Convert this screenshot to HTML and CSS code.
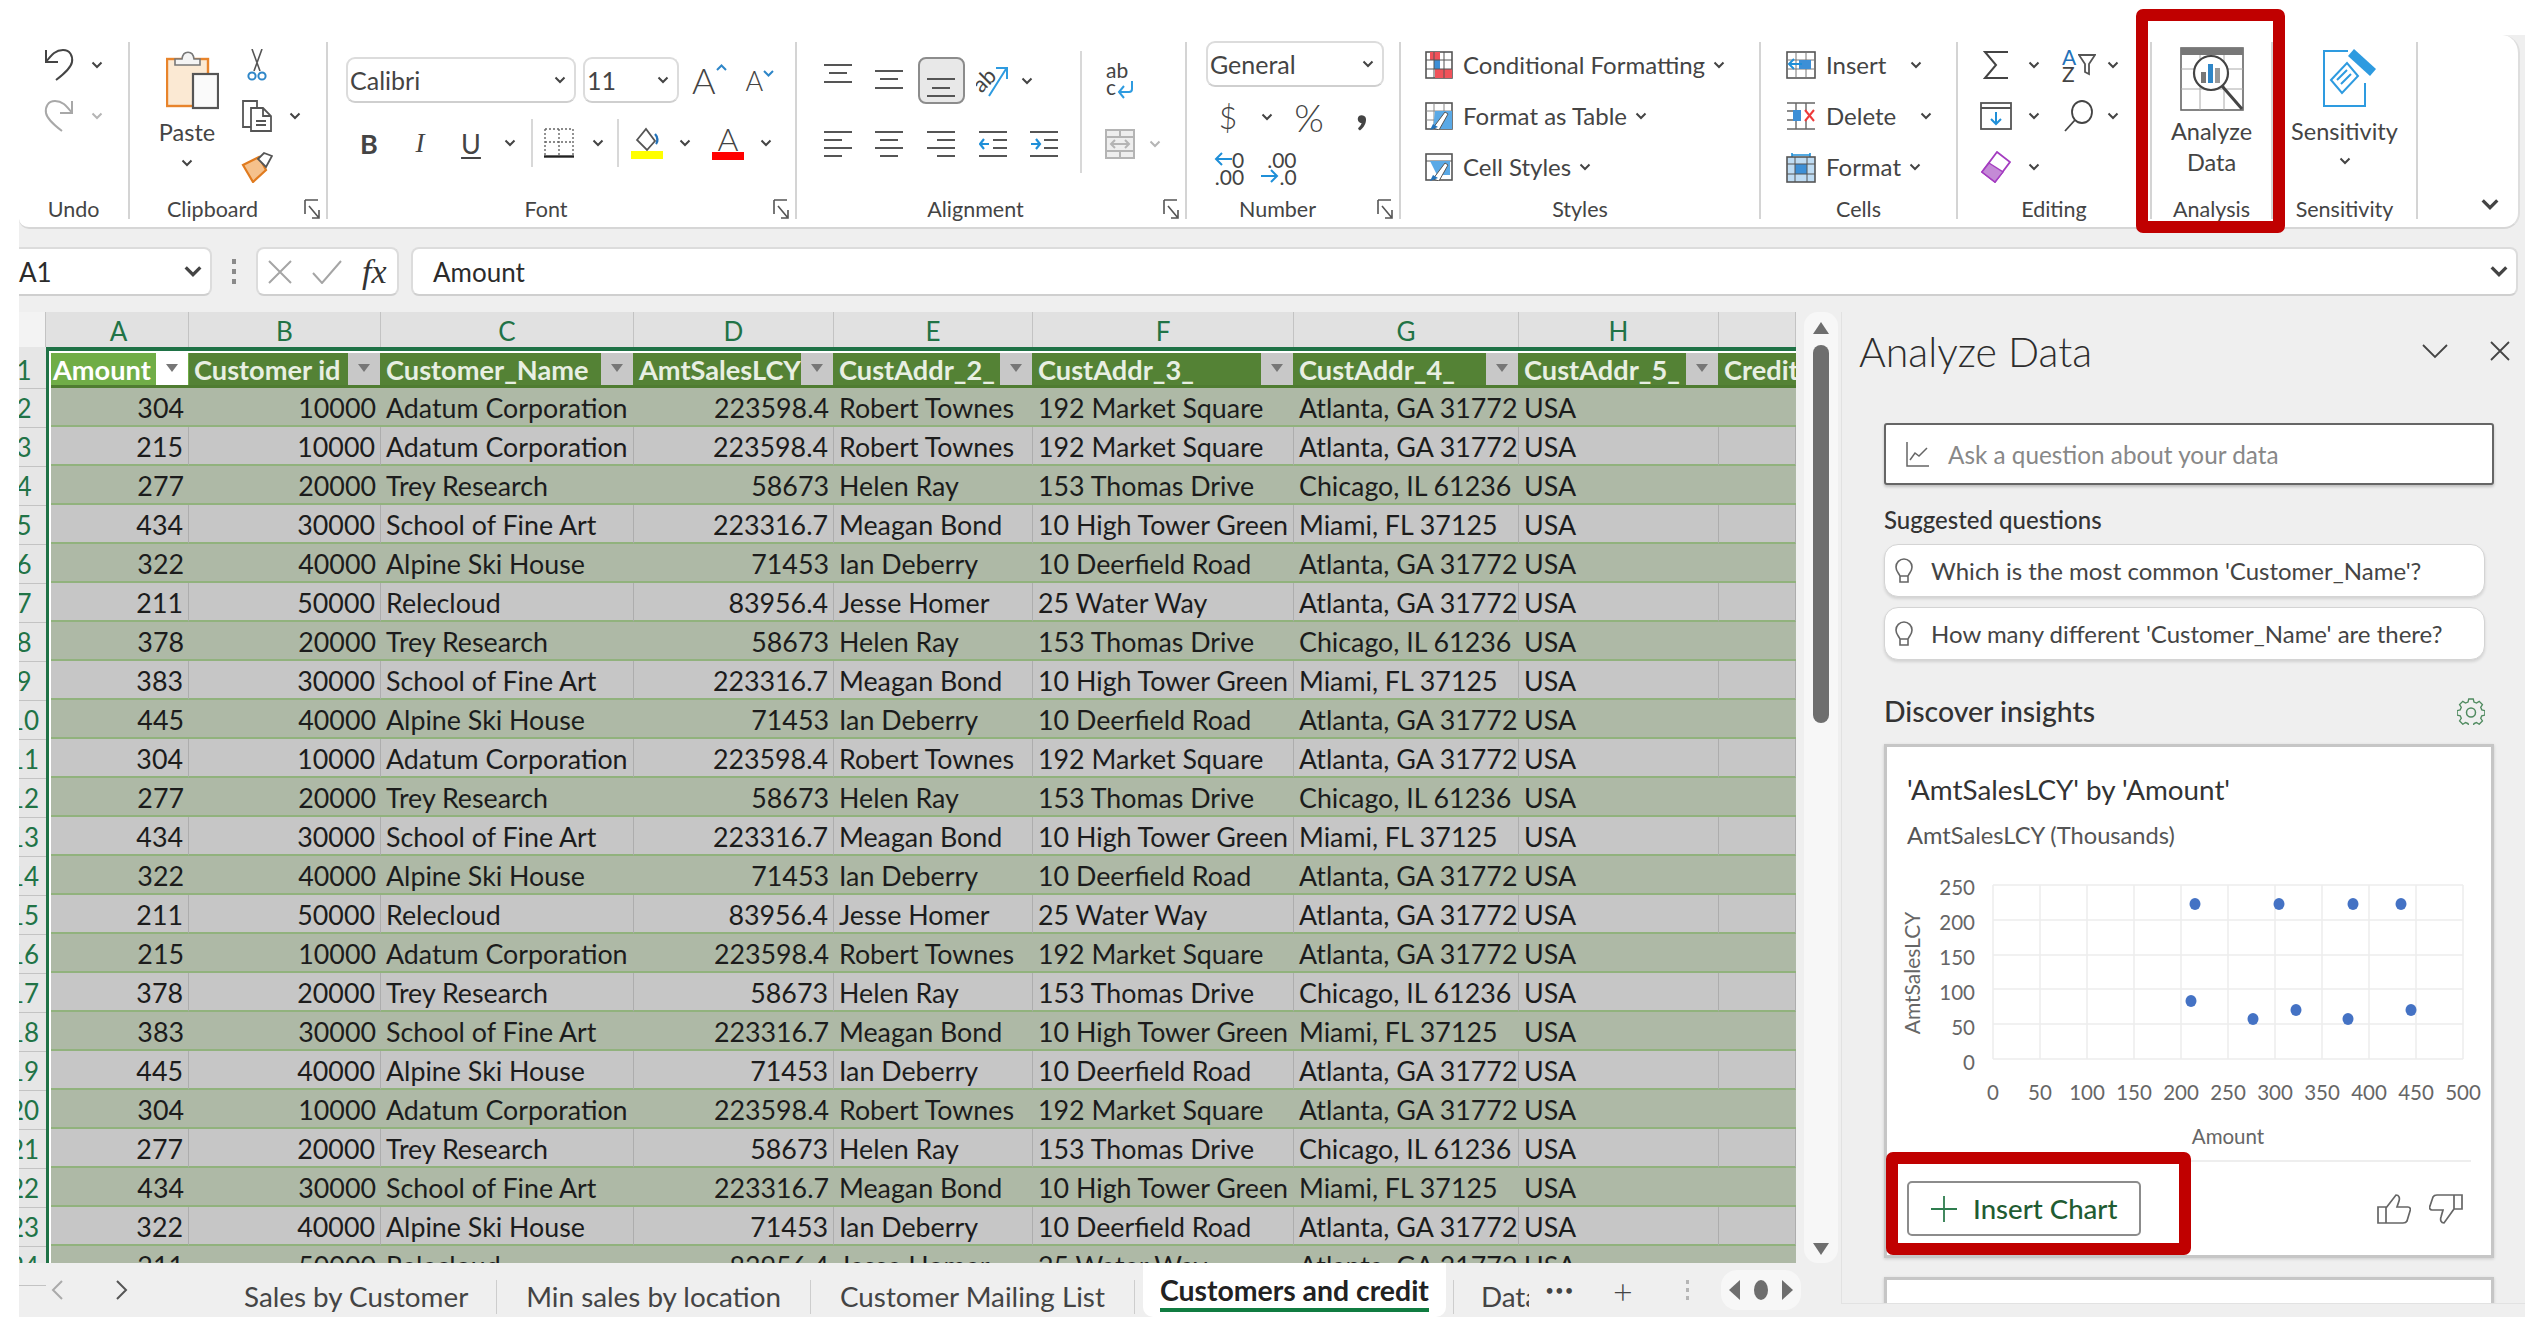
FILE: index.html
```html
<!DOCTYPE html>
<html lang="en">
<head>
    <meta charset="UTF-8">
    <title>Customers and credit - Excel</title>
    <link rel="stylesheet" href="styles.css">
</head>
<body>
    <svg class="sprite" width="0" height="0">
        <symbol id="chev" viewBox="0 0 12 8"><path d="M1.5 1.5 6 6l4.5-4.5" fill="none" stroke="currentColor" stroke-width="2"/></symbol>
        <symbol id="launcher" viewBox="0 0 16 20"><path d="M1 1h13M1 1v14M15 19 5 7M15 11v8H8" fill="none" stroke="#555" stroke-width="1.6"/></symbol>
    </svg>

    <div class="app">
        <!-- ribbon -->
        <div class="ribbon">
            <div class="group undo">
                <div class="grid3 undo-grid">
                    <svg width="30" height="33" viewBox="0 0 30 33" fill="none" stroke="#444" stroke-width="2"><path d="M2 2v12h12M2 14C8 6 12 2 19 2c7 0 10 6 9 12-1 6-8 12-16 18"/></svg>
                    <svg class="chev"><use href="#chev"/></svg>
                    <svg width="30" height="33" viewBox="0 0 30 33" fill="none" stroke="#a8a8a8" stroke-width="2"><path d="M28 2v12H16M28 14C22 6 18 2 11 2 4 2 1 8 2 14c1 6 8 12 16 18"/></svg>
                    <svg class="chev off"><use href="#chev"/></svg>
                </div>
                <div class="label"><span>Undo</span></div>
            </div>

            <div class="group clipboard">
                <div class="clip-body">
                    <div class="big-btn paste">
                        <svg class="paste-icon" width="53" height="60" viewBox="0 0 53 60"><rect x="1" y="9" width="41" height="47" fill="#fbe9d3" stroke="#e8842b" stroke-width="2.4"/><path d="M9 15V9h7c1-9 11-9 12 0h6v6z" fill="#f4f4f4" stroke="#777" stroke-width="1.6"/><rect x="27" y="24" width="25" height="34" fill="#fafafa" stroke="#555" stroke-width="2.2"/></svg>
                        <span class="big-text">Paste</span>
                        <svg class="chev"><use href="#chev"/></svg>
                    </div>
                    <div class="grid3 clip-grid">
                        <svg width="22" height="32" viewBox="0 0 22 32" fill="none"><path d="M6 0l8 22M16 0 8 22" stroke="#555" stroke-width="1.6"/><circle cx="6" cy="27" r="3.6" stroke="#2e86c8" stroke-width="2"/><circle cx="16" cy="27" r="3.6" stroke="#2e86c8" stroke-width="2"/></svg>
                        <span></span>
                        <svg width="32" height="33" viewBox="0 0 32 33" fill="none" stroke="#555" stroke-width="1.8"><path d="M10 28H2V2h14v7"/><path d="M10 9h12l8 8v15H10zM22 9v8h8M15 22h10M15 26h10" fill="#fff"/></svg>
                        <svg class="chev"><use href="#chev"/></svg>
                        <svg width="32" height="32" viewBox="0 0 32 32"><path d="M2 14 18 6l7 13-13 12z" fill="#f5c18c" stroke="#e07b1f" stroke-width="2.2"/><path d="M17 8l6-6 8 3-6 11z" fill="#fff" stroke="#555" stroke-width="1.8"/></svg>
                    </div>
                </div>
                <div class="label"><span>Clipboard</span><svg class="launch"><use href="#launcher"/></svg></div>
            </div>

            <div class="group font">
                <div class="font-body">
                    <div class="font-row">
                        <div class="select font-name"><span>Calibri</span><svg class="chev"><use href="#chev"/></svg></div>
                        <div class="select font-size"><span>11</span><svg class="chev"><use href="#chev"/></svg></div>
                        <span class="grow-a">A<svg width="11" height="7" viewBox="0 0 11 7"><path d="M1 6l4.5-4.5L10 6" fill="none" stroke="#2e86c8" stroke-width="2"/></svg></span>
                        <span class="shrink-a">A<svg width="11" height="7" viewBox="0 0 11 7"><path d="M1 1l4.5 4.5L10 1" fill="none" stroke="#2e86c8" stroke-width="2"/></svg></span>
                    </div>
                    <div class="font-tools">
                        <span class="fmt bold">B</span>
                        <span class="fmt ital">I</span>
                        <span class="fmt under">U</span>
                        <svg class="chev"><use href="#chev"/></svg>
                        <span class="vsep"></span>
                        <svg width="30" height="30" viewBox="0 0 30 30" fill="none" stroke="#666"><path d="M1 1h28M1 1v26M29 1v26M15 1v26M1 14h28" stroke-width="1.4" stroke-dasharray="2 2"/><path d="M0 28.5h30" stroke="#222" stroke-width="2.4"/></svg>
                        <svg class="chev"><use href="#chev"/></svg>
                        <span class="vsep"></span>
                        <svg width="32" height="32" viewBox="0 0 32 32"><path d="M6 13 15 2l9 12-8 9z" fill="#fff" stroke="#555" stroke-width="1.8"/><path d="M24 7c3 3 3 8 1 10" fill="none" stroke="#2372b9" stroke-width="2.4"/><rect y="24" width="32" height="8" fill="#ffff00"/></svg>
                        <svg class="chev"><use href="#chev"/></svg>
                        <div class="color-a"><span>A</span><i></i></div>
                        <svg class="chev"><use href="#chev"/></svg>
                    </div>
                </div>
                <div class="label"><span>Font</span><svg class="launch"><use href="#launcher"/></svg></div>
            </div>

            <div class="group alignment">
                <div class="align-grid">
                    <svg width="28" height="40" viewBox="0 0 28 40" stroke="#555" stroke-width="2.2"><path d="M0 4h28M5 12h18M0 21h28"/></svg>
                    <svg width="28" height="40" viewBox="0 0 28 40" stroke="#555" stroke-width="2.2"><path d="M0 10h28M5 18h18M0 27h28"/></svg>
                    <span class="active-btn"><svg width="28" height="40" viewBox="0 0 28 40" stroke="#555" stroke-width="2.2"><path d="M0 18h28M5 27h18M0 35h28"/></svg></span>
                    <svg width="34" height="36" viewBox="0 0 34 36"><text class="orient" x="-3" y="25" transform="rotate(-45 8 18)">ab</text><path d="M13 33 30 6M20 5h11v11" fill="none" stroke="#2e9be0" stroke-width="2"/></svg>
                    <svg class="chev"><use href="#chev"/></svg>
                    <span></span>
                    <span class="vsep tall"></span>
                    <svg width="34" height="36" viewBox="0 0 34 36"><text class="wrap-t" x="3" y="15">ab</text><text class="wrap-t" x="3" y="32">c</text><path d="M29 18v8q0 3-3 3H16M21 23l-5 6 5 6" fill="none" stroke="#2e9be0" stroke-width="2"/></svg>
                    <span></span>
                    <svg width="28" height="28" viewBox="0 0 28 28" stroke="#555" stroke-width="2.2"><path d="M0 2h28M0 10h18M0 18h28M0 26h18"/></svg>
                    <svg width="28" height="28" viewBox="0 0 28 28" stroke="#555" stroke-width="2.2"><path d="M0 2h28M5 10h18M0 18h28M5 26h18"/></svg>
                    <svg width="28" height="28" viewBox="0 0 28 28" stroke="#555" stroke-width="2.2"><path d="M0 2h28M10 10h18M0 18h28M10 26h18"/></svg>
                    <svg width="28" height="28" viewBox="0 0 28 28" fill="none" stroke-width="2.2"><path d="M0 2h28M14 10h14M14 18h14M0 26h28" stroke="#555"/><path d="M10 14H1M5 9l-4 5 4 5" stroke="#1f8fd8"/></svg>
                    <svg class="span2" width="28" height="28" viewBox="0 0 28 28" fill="none" stroke-width="2.2"><path d="M0 2h28M14 10h14M14 18h14M0 26h28" stroke="#555"/><path d="M1 14h9M6 9l4 5-4 5" stroke="#1f8fd8"/></svg>
                    <svg width="30" height="30" viewBox="0 0 30 30" fill="none" stroke="#b4b4b4" stroke-width="2"><rect x="1" y="1" width="28" height="28" fill="#eee"/><path d="M1 8h28M1 22h28M15 1v7M15 22v7M6 15h18M10 11l-4 4 4 4M20 11l4 4-4 4"/></svg>
                    <svg class="chev off"><use href="#chev"/></svg>
                </div>
                <div class="label"><span>Alignment</span><svg class="launch"><use href="#launcher"/></svg></div>
            </div>

            <div class="group number">
                <div class="number-body">
                    <div class="select number-fmt"><span>General</span><svg class="chev"><use href="#chev"/></svg></div>
                    <div class="num-row">
                        <span class="num-glyph">$</span>
                        <svg class="chev"><use href="#chev"/></svg>
                        <span class="num-glyph pct">%</span>
                        <span class="num-glyph comma">,</span>
                    </div>
                    <div class="num-row dec-row">
                        <span class="dec"><b><svg width="18" height="16" viewBox="0 0 18 16" fill="none" stroke="#1f8fd8" stroke-width="2"><path d="M18 8H2M8 2 2 8l6 6"/></svg>0</b><b class="end">.00</b></span>
                        <span class="dec"><b class="end">.00</b><b><svg width="18" height="16" viewBox="0 0 18 16" fill="none" stroke="#1f8fd8" stroke-width="2"><path d="M0 8h16M10 2l6 6-6 6"/></svg>.0</b></span>
                    </div>
                </div>
                <div class="label"><span>Number</span><svg class="launch"><use href="#launcher"/></svg></div>
            </div>

            <div class="group styles">
                <div class="list-body">
                    <div class="list-row">
                        <svg width="28" height="28" viewBox="0 0 28 28"><rect x="1" y="1" width="26" height="26" fill="#fff" stroke="#555" stroke-width="1.6"/><rect x="5" y="1" width="10" height="8" fill="#f0525a"/><rect x="10" y="18" width="17" height="9" fill="#f0525a"/><rect x="9" y="9" width="6" height="9" fill="#3d8fd6"/><path d="M1 9h26M1 18h26M9 1v26M19 1v26" stroke="#555" fill="none"/></svg>
                        <span>Conditional Formatting</span><svg class="chev small"><use href="#chev"/></svg>
                    </div>
                    <div class="list-row">
                        <svg width="28" height="28" viewBox="0 0 28 28"><rect x="1" y="1" width="26" height="26" fill="#fff" stroke="#555" stroke-width="1.6"/><path d="M1 9h26M1 18h26M9 1v26M19 1v26" stroke="#888" fill="none"/><path d="M10 9h17v18H8z" fill="#5aa9e6"/><path d="M8 26 20 10l3 2-9 16z" fill="#fff" stroke="#555"/><path d="M5 28l3-6 5 3z" fill="#2372b9"/></svg>
                        <span>Format as Table</span><svg class="chev small"><use href="#chev"/></svg>
                    </div>
                    <div class="list-row">
                        <svg width="28" height="28" viewBox="0 0 28 28"><rect x="1" y="1" width="26" height="26" fill="#fff" stroke="#555" stroke-width="1.6"/><path d="M1 8h26" stroke="#555"/><path d="M5 8h20v14H12z" fill="#5aa9e6"/><path d="M8 26 20 10l3 2-9 16z" fill="#fff" stroke="#555"/><path d="M5 28l3-6 5 3z" fill="#2372b9"/></svg>
                        <span>Cell Styles</span><svg class="chev small"><use href="#chev"/></svg>
                    </div>
                </div>
                <div class="label"><span>Styles</span></div>
            </div>

            <div class="group cells">
                <div class="list-body">
                    <div class="list-row">
                        <svg width="30" height="28" viewBox="0 0 30 28"><rect x="1" y="1" width="28" height="26" fill="#fff" stroke="#555" stroke-width="1.6"/><path d="M1 9h28M1 18h28M10 1v26M20 1v26" stroke="#777" fill="none"/><rect x="13" y="9" width="12" height="9" fill="#3d8fd6"/><path d="M16 13H3M8 8l-5 5 5 5" fill="none" stroke="#1f8fd8" stroke-width="2"/></svg>
                        <span>Insert</span><svg class="chev wide"><use href="#chev"/></svg>
                    </div>
                    <div class="list-row">
                        <svg width="30" height="28" viewBox="0 0 30 28"><path d="M1 1h28M1 9h10M1 18h10M1 27h28M10 1v26M20 1v8M20 18v9" stroke="#666" stroke-width="1.4" fill="none"/><rect x="7" y="8" width="8" height="11" fill="#3d8fd6"/><path d="M19 8l9 11M28 8l-9 11" stroke="#ee3b3b" stroke-width="2"/></svg>
                        <span>Delete</span><svg class="chev wide"><use href="#chev"/></svg>
                    </div>
                    <div class="list-row">
                        <svg width="30" height="32" viewBox="0 0 30 32"><path d="M6 2v5M24 2v5M6 4h18" stroke="#1f8fd8" stroke-width="1.6"/><rect x="1" y="6" width="28" height="25" fill="#bfdcf3" stroke="#555" stroke-width="1.6"/><rect x="9" y="13" width="12" height="10" fill="#3d8fd6"/><path d="M1 13h28M1 23h28M9 6v25M21 6v25" stroke="#555" fill="none"/></svg>
                        <span>Format</span><svg class="chev small"><use href="#chev"/></svg>
                    </div>
                </div>
                <div class="label"><span>Cells</span></div>
            </div>

            <div class="group editing">
                <div class="grid3 edit-grid">
                    <svg width="26" height="30" viewBox="0 0 26 30" fill="none" stroke="#444" stroke-width="2"><path d="M25 2H2l11 13L2 28h23"/></svg>
                    <svg class="chev"><use href="#chev"/></svg>
                    <span class="sort"><b>A</b><b>Z</b><svg width="18" height="22" viewBox="0 0 18 22"><path d="M1 1h16l-6 9v10l-4-2v-8z" fill="none" stroke="#555" stroke-width="1.8"/></svg></span>
                    <svg class="chev"><use href="#chev"/></svg>
                    <svg width="32" height="28" viewBox="0 0 32 28" fill="none"><rect x="1" y="1" width="30" height="26" fill="#fff" stroke="#555" stroke-width="1.8"/><path d="M1 6h30" stroke="#555" stroke-width="2"/><path d="M16 10v12M11 17l5 5 5-5" stroke="#1f8fd8" stroke-width="2"/></svg>
                    <svg class="chev"><use href="#chev"/></svg>
                    <svg width="30" height="32" viewBox="0 0 30 32" fill="none" stroke="#444" stroke-width="1.8"><ellipse cx="18" cy="12" rx="10" ry="11"/><path d="M11 20 1 31"/></svg>
                    <svg class="chev"><use href="#chev"/></svg>
                    <svg width="30" height="32" viewBox="0 0 30 32"><path d="M16 1 29 11 14 31 1 21z" fill="#fff" stroke="#a43cc0" stroke-width="1.8"/><path d="M8 12l14 9-8 10L1 21z" fill="#c48ad6" stroke="#a43cc0" stroke-width="1.4"/></svg>
                    <svg class="chev"><use href="#chev"/></svg>
                </div>
                <div class="label"><span>Editing</span></div>
            </div>

            <div class="group analysis">
                <div class="big-btn tall-btn">
                    <svg width="64" height="64" viewBox="0 0 64 64" fill="none"><rect x="1" y="1" width="62" height="62" fill="#fff" stroke="#666" stroke-width="1.6"/><rect x="1" y="1" width="62" height="7" fill="#777"/><path d="M1 22h62M1 42h62M20 8v55M44 8v55" stroke="#aaa"/><circle cx="31" cy="26" r="17" fill="#fff" stroke="#444" stroke-width="2.2"/><rect x="21" y="25" width="5" height="11" fill="#777"/><rect x="28" y="17" width="5" height="19" fill="#2e86c8"/><rect x="35" y="21" width="5" height="15" fill="#999"/><path d="M42 39 62 62" stroke="#444" stroke-width="3"/></svg>
                    <span class="big-text first">Analyze</span>
                    <span class="big-text">Data</span>
                </div>
                <div class="label"><span>Analysis</span></div>
            </div>

            <div class="group sensitivity">
                <div class="big-btn tall-btn">
                    <svg class="sens-icon" width="54" height="60" viewBox="0 0 54 60" fill="none"><path d="M25 4H1v55h41V36" stroke="#2e9be0" stroke-width="2"/><path d="M37 4l-29 29 13 13 29-29z" fill="#fff"/><path d="M31 2l22 20-6 7L25 9z" fill="#2e9be0"/><path d="M8 33 24 16l11 13-16 17zM14 33l10-10M18 37l10-10" stroke="#2e9be0" stroke-width="2"/></svg>
                    <span class="big-text first">Sensitivity</span>
                    <svg class="chev"><use href="#chev"/></svg>
                </div>
                <div class="label"><span>Sensitivity</span></div>
            </div>

            <div class="collapse"><svg class="chev-lg"><use href="#chev"/></svg></div>
        </div>

        <!-- formula bar -->
        <div class="formula-bar">
            <div class="fx-box name-box"><span>A1</span><svg class="chev-lg"><use href="#chev"/></svg></div>
            <span class="vdots"><i></i><i></i><i></i></span>
            <div class="fx-box fx-tools">
                <svg width="24" height="24" viewBox="0 0 24 24" fill="none" stroke="#a5a5a5" stroke-width="2"><path d="M1 1l22 22M23 1 1 23"/></svg>
                <svg width="30" height="24" viewBox="0 0 30 24" fill="none" stroke="#a5a5a5" stroke-width="2"><path d="M1 13l9 10L29 1"/></svg>
                <span class="fx">fx</span>
            </div>
            <div class="fx-box formula"><span>Amount</span><svg class="chev-lg"><use href="#chev"/></svg></div>
        </div>

        <div class="main">
            <div class="workarea">
                <div class="sheet-row">
                    <div class="grid-wrap">
                        <div class="col-heads">
                            <div class="corner"></div>
                            <div class="col-a">A</div><div class="col-b">B</div><div class="col-c">C</div><div class="col-d">D</div>
                            <div class="col-e">E</div><div class="col-f">F</div><div class="col-g">G</div><div class="col-h">H</div><div class="col-i"></div>
                        </div>
                        <div class="grid-body">
                            <div class="row-heads">
                                <div class="first-head"><span>1</span></div>
                                <div><span>2</span></div><div><span>3</span></div><div><span>4</span></div><div><span>5</span></div>
                                <div><span>6</span></div><div><span>7</span></div><div><span>8</span></div><div><span>9</span></div>
                                <div><span>10</span></div><div><span>11</span></div><div><span>12</span></div><div><span>13</span></div>
                                <div><span>14</span></div><div><span>15</span></div><div><span>16</span></div><div><span>17</span></div>
                                <div><span>18</span></div><div><span>19</span></div><div><span>20</span></div><div><span>21</span></div>
                                <div><span>22</span></div><div><span>23</span></div><div><span>24</span></div>
                            </div>
                            <div class="selection">
                                <table class="sheet">
                                    <colgroup>
                                        <col class="w-a"><col class="w-b"><col class="w-c"><col class="w-d"><col class="w-e"><col class="w-f"><col class="w-g"><col class="w-h"><col class="w-i">
                                    </colgroup>
                                    <thead>
                                        <tr>
                                            <th class="current"><div><span>Amount</span><button class="filter"></button></div></th>
                                            <th><div><span>Customer id</span><button class="filter"></button></div></th>
                                            <th><div><span>Customer_Name</span><button class="filter"></button></div></th>
                                            <th><div><span>AmtSalesLCY</span><button class="filter"></button></div></th>
                                            <th><div><span>CustAddr_2_</span><button class="filter"></button></div></th>
                                            <th><div><span>CustAddr_3_</span><button class="filter"></button></div></th>
                                            <th><div><span>CustAddr_4_</span><button class="filter"></button></div></th>
                                            <th><div><span>CustAddr_5_</span><button class="filter"></button></div></th>
                                            <th><div><span>Credit</span></div></th>
                                        </tr>
                                    </thead>
                                    <tbody>
                                        <tr><td>304</td><td>10000</td><td>Adatum Corporation</td><td>223598.4</td><td>Robert Townes</td><td>192 Market Square</td><td>Atlanta, GA 31772</td><td>USA</td><td></td></tr>
                                        <tr><td>215</td><td>10000</td><td>Adatum Corporation</td><td>223598.4</td><td>Robert Townes</td><td>192 Market Square</td><td>Atlanta, GA 31772</td><td>USA</td><td></td></tr>
                                        <tr><td>277</td><td>20000</td><td>Trey Research</td><td>58673</td><td>Helen Ray</td><td>153 Thomas Drive</td><td>Chicago, IL 61236</td><td>USA</td><td></td></tr>
                                        <tr><td>434</td><td>30000</td><td>School of Fine Art</td><td>223316.7</td><td>Meagan Bond</td><td>10 High Tower Green</td><td>Miami, FL 37125</td><td>USA</td><td></td></tr>
                                        <tr><td>322</td><td>40000</td><td>Alpine Ski House</td><td>71453</td><td>Ian Deberry</td><td>10 Deerfield Road</td><td>Atlanta, GA 31772</td><td>USA</td><td></td></tr>
                                        <tr><td>211</td><td>50000</td><td>Relecloud</td><td>83956.4</td><td>Jesse Homer</td><td>25 Water Way</td><td>Atlanta, GA 31772</td><td>USA</td><td></td></tr>
                                        <tr><td>378</td><td>20000</td><td>Trey Research</td><td>58673</td><td>Helen Ray</td><td>153 Thomas Drive</td><td>Chicago, IL 61236</td><td>USA</td><td></td></tr>
                                        <tr><td>383</td><td>30000</td><td>School of Fine Art</td><td>223316.7</td><td>Meagan Bond</td><td>10 High Tower Green</td><td>Miami, FL 37125</td><td>USA</td><td></td></tr>
                                        <tr><td>445</td><td>40000</td><td>Alpine Ski House</td><td>71453</td><td>Ian Deberry</td><td>10 Deerfield Road</td><td>Atlanta, GA 31772</td><td>USA</td><td></td></tr>
                                        <tr><td>304</td><td>10000</td><td>Adatum Corporation</td><td>223598.4</td><td>Robert Townes</td><td>192 Market Square</td><td>Atlanta, GA 31772</td><td>USA</td><td></td></tr>
                                        <tr><td>277</td><td>20000</td><td>Trey Research</td><td>58673</td><td>Helen Ray</td><td>153 Thomas Drive</td><td>Chicago, IL 61236</td><td>USA</td><td></td></tr>
                                        <tr><td>434</td><td>30000</td><td>School of Fine Art</td><td>223316.7</td><td>Meagan Bond</td><td>10 High Tower Green</td><td>Miami, FL 37125</td><td>USA</td><td></td></tr>
                                        <tr><td>322</td><td>40000</td><td>Alpine Ski House</td><td>71453</td><td>Ian Deberry</td><td>10 Deerfield Road</td><td>Atlanta, GA 31772</td><td>USA</td><td></td></tr>
                                        <tr><td>211</td><td>50000</td><td>Relecloud</td><td>83956.4</td><td>Jesse Homer</td><td>25 Water Way</td><td>Atlanta, GA 31772</td><td>USA</td><td></td></tr>
                                        <tr><td>215</td><td>10000</td><td>Adatum Corporation</td><td>223598.4</td><td>Robert Townes</td><td>192 Market Square</td><td>Atlanta, GA 31772</td><td>USA</td><td></td></tr>
                                        <tr><td>378</td><td>20000</td><td>Trey Research</td><td>58673</td><td>Helen Ray</td><td>153 Thomas Drive</td><td>Chicago, IL 61236</td><td>USA</td><td></td></tr>
                                        <tr><td>383</td><td>30000</td><td>School of Fine Art</td><td>223316.7</td><td>Meagan Bond</td><td>10 High Tower Green</td><td>Miami, FL 37125</td><td>USA</td><td></td></tr>
                                        <tr><td>445</td><td>40000</td><td>Alpine Ski House</td><td>71453</td><td>Ian Deberry</td><td>10 Deerfield Road</td><td>Atlanta, GA 31772</td><td>USA</td><td></td></tr>
                                        <tr><td>304</td><td>10000</td><td>Adatum Corporation</td><td>223598.4</td><td>Robert Townes</td><td>192 Market Square</td><td>Atlanta, GA 31772</td><td>USA</td><td></td></tr>
                                        <tr><td>277</td><td>20000</td><td>Trey Research</td><td>58673</td><td>Helen Ray</td><td>153 Thomas Drive</td><td>Chicago, IL 61236</td><td>USA</td><td></td></tr>
                                        <tr><td>434</td><td>30000</td><td>School of Fine Art</td><td>223316.7</td><td>Meagan Bond</td><td>10 High Tower Green</td><td>Miami, FL 37125</td><td>USA</td><td></td></tr>
                                        <tr><td>322</td><td>40000</td><td>Alpine Ski House</td><td>71453</td><td>Ian Deberry</td><td>10 Deerfield Road</td><td>Atlanta, GA 31772</td><td>USA</td><td></td></tr>
                                        <tr><td>211</td><td>50000</td><td>Relecloud</td><td>83956.4</td><td>Jesse Homer</td><td>25 Water Way</td><td>Atlanta, GA 31772</td><td>USA</td><td></td></tr>
                                    </tbody>
                                </table>
                            </div>
                        </div>
                    </div>
                    <div class="vscroll">
                        <div class="tri-up"></div>
                        <div class="thumb"></div>
                        <div class="tri-down"></div>
                    </div>
                </div>

                <div class="tabs">
                    <div class="tab-nav">
                        <svg width="12" height="20" viewBox="0 0 12 20" fill="none" stroke="#aaa" stroke-width="2"><path d="M11 1 2 10l9 9"/></svg>
                        <svg width="12" height="20" viewBox="0 0 12 20" fill="none" stroke="#555" stroke-width="2"><path d="M1 1l9 9-9 9"/></svg>
                    </div>
                    <div class="tab">Sales by Customer</div>
                    <div class="tab">Min sales by location</div>
                    <div class="tab">Customer Mailing List</div>
                    <div class="tab active"><span>Customers and credit</span></div>
                    <div class="tab clipped"><span>Data</span></div>
                    <span class="more">•••</span>
                    <span class="add">+</span>
                    <span class="vdots small"><i></i><i></i><i></i></span>
                    <div class="tab-scroll"><i class="arrow-l"></i><i class="dot"></i><i class="arrow-r"></i></div>
                </div>
            </div>

            <!-- task pane -->
            <div class="panel">
                <div class="panel-head">
                    <h2>Analyze Data</h2>
                    <svg width="26" height="15" viewBox="0 0 26 15" fill="none" stroke="#444" stroke-width="1.8"><path d="M1 1l12 12L25 1"/></svg>
                    <svg width="20" height="20" viewBox="0 0 20 20" fill="none" stroke="#444" stroke-width="1.8"><path d="M1 1l18 18M19 1 1 19"/></svg>
                </div>
                <div class="panel-body">
                    <div class="ask">
                        <svg width="24" height="26" viewBox="0 0 24 26" fill="none" stroke="#666" stroke-width="1.5"><path d="M1 1v24h22M4 19l5-7 4 3 8-8"/></svg>
                        <span>Ask a question about your data</span>
                    </div>
                    <div class="suggest-title">Suggested questions</div>
                    <div class="pill">
                        <svg width="18" height="26" viewBox="0 0 18 26" fill="none" stroke="#666" stroke-width="1.6"><path d="M5 18C3 14 1 13 1 9a8 8 0 0 1 16 0c0 4-2 5-4 9zM5 18v6h8v-6"/></svg>
                        <span>Which is the most common 'Customer_Name'?</span>
                    </div>
                    <div class="pill">
                        <svg width="18" height="26" viewBox="0 0 18 26" fill="none" stroke="#666" stroke-width="1.6"><path d="M5 18C3 14 1 13 1 9a8 8 0 0 1 16 0c0 4-2 5-4 9zM5 18v6h8v-6"/></svg>
                        <span>How many different 'Customer_Name' are there?</span>
                    </div>
                    <div class="discover">
                        <span>Discover insights</span>
                        <svg width="28" height="28" viewBox="0 0 28 28" fill="none" stroke="#4f8a5f" stroke-width="1.5"><path d="M11.5 1.5h5l.8 3.4 2.8 1.2 3-1.9 3.6 3.6-1.9 3 1.2 2.8 3.4.8v5l-3.4.8-1.2 2.8 1.9 3-3.6 3.6-3-1.9-2.8 1.2-.8 3.4h-5l-.8-3.4-2.8-1.2-3 1.9-3.6-3.6 1.9-3-1.2-2.8-3.4-.8v-5l3.4-.8 1.2-2.8-1.9-3 3.6-3.6 3 1.9 2.8-1.2z" transform="translate(1.4 .6) scale(.9)"/><circle cx="14" cy="15.5" r="4.5"/></svg>
                    </div>
                    <div class="card">
                        <div class="card-title">'AmtSalesLCY' by 'Amount'</div>
                        <div class="card-sub">AmtSalesLCY (Thousands)</div>
                        <svg class="chart" width="604" height="290" viewBox="1888 860 604 290">
                            <g class="gridlines">
                                <path d="M1994 884h470M1994 919h470M1994 954h470M1994 988h470M1994 1023h470M1994 1058h470"/>
                                <path d="M1994 884v174M2041 884v174M2088 884v174M2135 884v174M2182 884v174M2229 884v174M2276 884v174M2323 884v174M2370 884v174M2417 884v174M2464 884v174"/>
                            </g>
                            <g class="ticks-y">
                                <text x="1976" y="894">250</text><text x="1976" y="929">200</text><text x="1976" y="964">150</text>
                                <text x="1976" y="999">100</text><text x="1976" y="1034">50</text><text x="1976" y="1069">0</text>
                            </g>
                            <g class="ticks-x">
                                <text x="1994" y="1099">0</text><text x="2041" y="1099">50</text><text x="2088" y="1099">100</text><text x="2135" y="1099">150</text>
                                <text x="2182" y="1099">200</text><text x="2229" y="1099">250</text><text x="2276" y="1099">300</text><text x="2323" y="1099">350</text>
                                <text x="2370" y="1099">400</text><text x="2417" y="1099">450</text><text x="2464" y="1099">500</text>
                            </g>
                            <text class="axis-x" x="2229" y="1143">Amount</text>
                            <text class="axis-y" transform="translate(1921 972) rotate(-90)">AmtSalesLCY</text>
                            <g class="points">
                                <ellipse cx="2196" cy="903" rx="5.5" ry="6"/><ellipse cx="2280" cy="903" rx="5.5" ry="6"/><ellipse cx="2354" cy="903" rx="5.5" ry="6"/><ellipse cx="2402" cy="903" rx="5.5" ry="6"/>
                                <ellipse cx="2192" cy="1000" rx="5.5" ry="6"/><ellipse cx="2254" cy="1018" rx="5.5" ry="6"/><ellipse cx="2297" cy="1009" rx="5.5" ry="6"/><ellipse cx="2349" cy="1018" rx="5.5" ry="6"/><ellipse cx="2412" cy="1009" rx="5.5" ry="6"/>
                            </g>
                        </svg>
                        <div class="card-actions">
                            <div class="insert-btn">
                                <svg width="26" height="26" viewBox="0 0 26 26" stroke="#2f7d4f" stroke-width="1.8"><path d="M13 0v26M0 13h26"/></svg>
                                <span>Insert Chart</span>
                            </div>
                            <div class="thumbs">
                                <svg width="34" height="30" viewBox="0 0 34 30" fill="none" stroke="#666" stroke-width="1.7"><path d="M1 13h8v16H1zM9 14 19 1c3 0 4 3 3 6l-2 6h11c2 0 3 2 2 4l-3 10c-1 2-2 2-4 2H9"/></svg>
                                <svg width="34" height="30" viewBox="0 0 34 30" fill="none" stroke="#666" stroke-width="1.7"><path d="M33 1h-8v14h8zM25 15 15 29c-3 0-4-3-3-6l2-7H3c-2 0-3-2-2-4L4 3c1-2 2-2 4-2h17"/></svg>
                            </div>
                        </div>
                        <div class="highlight chart-mark"></div>
                    </div>
                    <div class="card next"></div>
                </div>
            </div>
        </div>
    </div>

    <div class="highlight ribbon-mark"></div>
</body>
</html>
```

FILE: styles.css
```css
* {
    box-sizing: border-box;
}
html, body {
    margin: 0;
    height: 100%;
    overflow: hidden;
}
body {
    position: relative;
    background: #ffffff;
    color: #444444;
    font-family: "Lato", "Liberation Sans", sans-serif;
    font-size: 24px;
}
.sprite {
    position: absolute;
}
.app {
    margin: 35px 0 0 19px;
    width: 2506px;
    height: 1282px;
    background: #efefef;
}
.chev {
    width: 12px;
    height: 8px;
    color: #444444;
    flex: none;
}
.chev.off {
    color: #b5b5b5;
}
.chev-lg {
    width: 22px;
    height: 13px;
    color: #444444;
    flex: none;
}
.highlight {
    position: absolute;
    border: 12px solid #c00000;
    border-radius: 7px;
    pointer-events: none;
}
.ribbon-mark {
    left: 2136px;
    top: 9px;
    width: 149px;
    height: 224px;
}

/* ribbon */
.ribbon {
    display: flex;
    width: 2501px;
    height: 194px;
    padding-top: 7px;
    background: #ffffff;
    border-bottom: 2px solid #d6d6d6;
    border-right: 2px solid #dedede;
    border-radius: 0 18px 16px 10px;
}
.group {
    flex: none;
    height: 177px;
    display: flex;
    flex-direction: column;
    justify-content: space-between;
    border-right: 2px solid #d4d4d4;
}
.undo { width: 111px; }
.clipboard { width: 198px; }
.font { width: 469px; }
.alignment { width: 390px; }
.number { width: 214px; }
.styles { width: 360px; }
.cells { width: 197px; }
.editing { width: 194px; }
.analysis { width: 121px; }
.sensitivity { width: 145px; }
.label {
    display: flex;
    align-items: center;
    height: 20px;
    line-height: 28px;
    font-size: 21.5px;
    color: #444444;
    text-align: center;
}
.label span {
    flex: 1;
}
.launch {
    width: 16px;
    height: 20px;
    margin: 0 6px 0 9px;
    flex: none;
}
.grid3 {
    display: grid;
    grid-template-rows: repeat(3, 51px);
    place-items: center;
    margin-top: -3px;
}
.undo-grid {
    grid-template-columns: 38px 38px;
    padding-left: 21px;
}
.clip-body {
    display: flex;
    padding-left: 28px;
}
.big-btn {
    display: flex;
    flex-direction: column;
    align-items: center;
}
.paste {
    width: 58px;
    padding-top: 8px;
}
.paste-icon {
    margin-left: 11px;
    flex: none;
}
.big-text {
    line-height: 31px;
    font-size: 23.5px;
    white-space: nowrap;
}
.paste .big-text {
    margin-top: 7px;
}
.paste .chev {
    margin-top: 11px;
}
.clip-grid {
    margin-left: 22px;
    grid-template-columns: 38px 38px;
}

/* font group */
.font-body {
    padding: 15px 0 0 18px;
}
.font-row {
    display: flex;
    align-items: center;
    height: 46px;
}
.select {
    display: flex;
    align-items: center;
    justify-content: space-between;
    height: 46px;
    padding: 0 8px 0 2px;
    background: #ffffff;
    border: 2px solid #dcdcdc;
    border-bottom-color: #cfcfcf;
    border-radius: 9px;
    font-size: 25px;
}
.font-name {
    width: 230px;
    margin-right: 7px;
}
.font-size {
    width: 96px;
}
.grow-a, .shrink-a {
    display: flex;
    align-items: flex-start;
    font-weight: 300;
}
.grow-a {
    margin-left: 13px;
    font-size: 36px;
}
.shrink-a {
    margin-left: 19px;
    font-size: 27px;
}
.grow-a svg, .shrink-a svg {
    margin-top: 6px;
}
.font-tools {
    display: grid;
    grid-template-columns: 50px 52px 50px 28px 16px 38px 40px 0 58px 18px 68px 8px;
    place-items: center;
    height: 48px;
    margin: 16px 0 0 -2px;
}
.fmt {
    font-size: 27px;
}
.bold {
    font-weight: 700;
}
.ital {
    font-family: "Liberation Serif", serif;
    font-style: italic;
}
.under {
    text-decoration: underline;
    text-underline-offset: 3px;
}
.vsep {
    display: block;
    width: 2px;
    height: 48px;
    background: #d8d8d8;
}
.color-a {
    display: flex;
    flex-direction: column;
    align-items: center;
    width: 32px;
}
.color-a span {
    line-height: 26px;
    font-size: 32px;
    font-weight: 300;
}
.color-a i {
    display: block;
    width: 32px;
    height: 8px;
    background: #ff0000;
}

/* alignment */
.align-grid {
    display: grid;
    grid-template-columns: 52px 50px 54px 50px 18px 34px 22px 56px 14px;
    grid-template-rows: 63px 63px;
    place-items: center;
    padding: 7px 0 0 15px;
}
.active-btn {
    display: flex;
    align-items: center;
    justify-content: center;
    width: 47px;
    height: 47px;
    background: #e8e8e8;
    border: 2px solid #8c8c8c;
    border-radius: 8px;
}
.tall {
    grid-column: 7;
    grid-row: 1 / 3;
    height: 122px;
}
.span2 {
    grid-column: span 2;
}
.orient {
    font-size: 22px;
    fill: #444444;
}
.wrap-t {
    font-size: 21px;
    fill: #444444;
}

/* number */
.number-body {
    padding-left: 19px;
    margin-top: -1px;
}
.number-fmt {
    width: 178px;
}
.num-row {
    display: grid;
    grid-template-columns: 44px 34px 50px 56px;
    place-items: center;
    height: 51px;
}
.num-row:nth-child(2) {
    margin-top: 4px;
}
.dec-row {
    grid-template-columns: 46px 54px;
}
.num-glyph {
    font-size: 32px;
    font-weight: 300;
}
.pct {
    font-size: 38px;
}
.comma {
    font-weight: 900;
    font-size: 52px;
    line-height: 20px;
    margin-top: -28px;
}
.dec {
    display: flex;
    flex-direction: column;
    font-size: 21px;
    line-height: 17px;
}
.dec b {
    display: flex;
    align-items: center;
    font-weight: 400;
}
.dec .end {
    justify-content: flex-end;
}

/* styles and cells lists */
.list-body {
    margin-top: -3px;
}
.list-row {
    display: flex;
    align-items: center;
    height: 51px;
    font-size: 24px;
    white-space: nowrap;
}
.list-row svg:first-child {
    margin-right: 10px;
    flex: none;
}
.list-row .small {
    margin-left: 8px;
}
.list-row .wide {
    margin-left: 24px;
}
.styles .list-body {
    padding-left: 24px;
}
.cells .list-body {
    padding-left: 25px;
}

/* editing */
.edit-grid {
    grid-template-columns: 40px 36px 54px 14px;
    padding-left: 18px;
}
.sort {
    display: grid;
    grid-template-columns: 16px 18px;
    grid-template-rows: 17px 17px;
    font-size: 21px;
    line-height: 17px;
}
.sort b {
    font-weight: 400;
    grid-column: 1;
}
.sort b:first-child {
    color: #2372b9;
}
.sort svg {
    grid-column: 2;
    grid-row: 1 / 3;
    align-self: center;
}

/* big buttons */
.tall-btn {
    padding-top: 5px;
}
.tall-btn .first {
    margin-top: 5px;
}
.sens-icon {
    margin-left: 10px;
}
.sensitivity .big-btn .chev {
    margin-top: 10px;
}
.sensitivity .first {
    margin-top: 9px;
}
.collapse {
    flex: 1;
    display: flex;
    align-items: flex-end;
    justify-content: flex-end;
    height: 169px;
    padding-right: 17px;
}

/* formula bar */
.formula-bar {
    display: flex;
    align-items: center;
    height: 49px;
    margin-top: 18px;
    width: 2499px;
}
.fx-box {
    display: flex;
    align-items: center;
    height: 49px;
    background: #ffffff;
    border: 2px solid #dcdcdc;
    border-bottom-color: #cfcfcf;
    border-radius: 8px;
    font-size: 26px;
    color: #2b2b2b;
}
.name-box {
    width: 193px;
    justify-content: space-between;
    padding-right: 6px;
    border-left: 0;
    border-radius: 0 8px 8px 0;
}
.vdots {
    display: flex;
    flex-direction: column;
    gap: 5px;
    width: 44px;
    align-items: center;
}
.vdots i {
    display: block;
    width: 4px;
    height: 5px;
    background: #8a8a8a;
}
.fx-tools {
    width: 143px;
    padding-left: 10px;
    gap: 20px;
}
.fx {
    font-family: "Liberation Serif", serif;
    font-style: italic;
    font-size: 34px;
    line-height: 40px;
    color: #333333;
}
.formula {
    flex: 1;
    margin-left: 12px;
    padding: 0 6px 0 20px;
    justify-content: space-between;
}

/* sheet */
.main {
    display: flex;
    margin-top: 16px;
}
.workarea {
    width: 1822px;
}
.sheet-row {
    display: flex;
    height: 951px;
}
.grid-wrap {
    width: 1777px;
    overflow: hidden;
}
.col-heads {
    display: flex;
    height: 35px;
    background: #e1e1e1;
    color: #217346;
    font-size: 26px;
    line-height: 38px;
    text-align: center;
}
.col-heads div {
    flex: none;
    border-right: 1px solid #c3c3c3;
}
.corner {
    width: 27px;
    background: #f3f3f3;
}
.col-a { width: 143px; padding-left: 3px; }
.col-b, .w-b { width: 192px; }
.col-c, .w-c { width: 253px; }
.col-d, .w-d { width: 200px; }
.col-e, .w-e { width: 199px; }
.col-f, .w-f { width: 261px; }
.col-g, .w-g { width: 225px; }
.col-h, .w-h { width: 200px; }
.col-i, .w-i { width: 77px; }
.w-a { width: 138px; }
.grid-body {
    display: flex;
}
.row-heads {
    width: 27px;
    flex: none;
    overflow: hidden;
    background: #e6e6e6;
    color: #217346;
    font-size: 26px;
}
.row-heads div {
    display: flex;
    justify-content: center;
    width: 10px;
    height: 39px;
    line-height: 40px;
}
.row-heads div::after {
    content: "";
    position: absolute;
    left: 19px;
    width: 27px;
    height: 39px;
    border-bottom: 1px solid #c3c3c3;
    pointer-events: none;
}
.row-heads .first-head {
    height: 41px;
    line-height: 46px;
}
.row-heads .first-head::after {
    height: 41px;
}
.selection {
    flex: 1;
    padding: 2px 0 0 2px;
    background: #ffffff;
    border-top: 4px solid #1f7246;
    border-left: 3px solid #1f7246;
    min-width: 0;
}
.sheet {
    table-layout: fixed;
    width: 1745px;
    border-collapse: separate;
    border-spacing: 0;
    color: #1c1c1c;
    font-size: 26.8px;
}
.sheet th {
    height: 35px;
    padding: 0;
    background: #548235;
    border-bottom: 3px solid #4f7c31;
    color: #e8efe3;
    font-size: 27.2px;
    font-weight: 700;
    text-align: left;
}
.sheet th.current {
    background: #70ad47;
    color: #ffffff;
}
.sheet th.current span {
    padding-left: 2px;
}
.sheet th div {
    display: flex;
    align-items: flex-start;
    height: 32px;
}
.sheet th span {
    flex: 1;
    min-width: 0;
    padding-left: 5px;
    line-height: 34px;
    overflow: hidden;
    white-space: nowrap;
}
.filter {
    position: relative;
    flex: none;
    width: 32px;
    height: 32px;
    margin: 0 1px 0 0;
    padding: 0;
    border: 0;
    background: #c8c8c8;
}
.filter::after {
    content: "";
    position: absolute;
    left: 10px;
    top: 11px;
    border-left: 6px solid transparent;
    border-right: 6px solid transparent;
    border-top: 8px solid #777777;
}
.current .filter {
    background: #ffffff;
}
.sheet td {
    height: 39px;
    padding: 3px 5px 0;
    overflow: hidden;
    white-space: nowrap;
    border-bottom: 2px solid #91b27d;
    background: #aeb9a6;
}
.sheet tbody tr:nth-child(even) td {
    background: #c6c6c6;
    border-right: 1px solid #adadad;
    border-bottom-color: #91b27d;
}
.sheet td:nth-child(1),
.sheet td:nth-child(2),
.sheet td:nth-child(4) {
    text-align: right;
}

/* scrollbar */
.vscroll {
    display: flex;
    flex-direction: column;
    align-items: center;
    width: 34px;
    margin: 0 3px 0 8px;
    padding-top: 10px;
    background: #f7f7f7;
    border-radius: 14px;
}
.tri-up, .tri-down {
    width: 0;
    border-left: 8px solid transparent;
    border-right: 8px solid transparent;
}
.tri-up {
    border-bottom: 12px solid #6e6e6e;
}
.tri-down {
    margin-top: auto;
    margin-bottom: 8px;
    border-top: 12px solid #6e6e6e;
}
.thumb {
    width: 16px;
    height: 378px;
    margin-top: 11px;
    background: #6e6e6e;
    border-radius: 8px;
}

/* sheet tabs */
.tabs {
    display: flex;
    align-items: center;
    height: 54px;
    font-size: 27.8px;
    color: #444444;
    white-space: nowrap;
}
.tab-nav {
    display: flex;
    gap: 53px;
    width: 196px;
    padding-left: 32px;
}
.tab {
    height: 34px;
    margin-top: 14px;
    padding: 0 29px;
    line-height: 33px;
    border-right: 1px solid #cdcdcd;
}
.tab:nth-child(2) {
    padding-right: 28px;
}
.tab.active {
    height: 54px;
    margin: 0 7px 0 8px;
    padding: 12px 17px 0;
    font-size: 28.4px;
    line-height: 31px;
    background: #ffffff;
    border: 0;
    border-radius: 0 0 10px 10px;
    color: #222222;
    font-weight: 700;
}
.tab.active span {
    display: block;
    height: 37px;
    border-bottom: 4px solid #107c41;
}
.tab.clipped {
    width: 76px;
    padding: 0 0 0 27px;
    overflow: hidden;
    border-right: 0;
    border-left: 1px solid #cdcdcd;
}
.tab.clipped span {
    display: block;
    width: 49px;
    overflow: hidden;
}
.more {
    width: 62px;
    text-align: center;
    font-size: 15px;
    letter-spacing: 1px;
}
.add {
    width: 64px;
    text-align: center;
    font-size: 34px;
    font-weight: 300;
}
.vdots.small {
    width: 66px;
    gap: 4px;
}
.vdots.small i {
    width: 3px;
    height: 4px;
    background: #b5b5b5;
}
.tab-scroll {
    display: flex;
    align-items: center;
    justify-content: space-between;
    width: 80px;
    height: 40px;
    padding: 0 8px;
    background: #f7f7f7;
    border-radius: 16px;
}
.tab-scroll .dot {
    width: 14px;
    height: 20px;
    border-radius: 50%;
    background: #6e6e6e;
}
.arrow-l {
    border-top: 10px solid transparent;
    border-bottom: 10px solid transparent;
    border-right: 11px solid #6e6e6e;
}
.arrow-r {
    border-top: 10px solid transparent;
    border-bottom: 10px solid transparent;
    border-left: 11px solid #6e6e6e;
}

/* task pane */
.panel {
    width: 684px;
    height: 992px;
    overflow: hidden;
    border-left: 1px solid #e2e2e2;
    border-bottom: 1px solid #e2e2e2;
}
.panel-head {
    display: flex;
    align-items: center;
    height: 72px;
    padding: 6px 0 0 17px;
}
.panel-head h2 {
    flex: 1;
    margin: 0;
    font-size: 41px;
    font-weight: 300;
    color: #2d2d2d;
}
.panel-head svg:nth-of-type(1) {
    margin-right: 42px;
}
.panel-head svg:nth-of-type(2) {
    margin-right: 15px;
}
.panel-body {
    padding: 39px 30px 0 42px;
    color: #444444;
}
.ask {
    display: flex;
    align-items: center;
    gap: 18px;
    width: 610px;
    height: 62px;
    padding-left: 20px;
    background: #ffffff;
    border: 2px solid #666666;
    border-radius: 3px;
    box-shadow: 0 2px 3px rgba(0, 0, 0, 0.2);
    color: #888888;
    font-size: 24.3px;
}
.suggest-title {
    margin: 19px 0 8px;
    line-height: 32px;
    font-weight: 500;
    color: #333333;
}
.pill {
    display: flex;
    align-items: center;
    gap: 18px;
    width: 601px;
    height: 53px;
    margin-bottom: 11px;
    padding-left: 10px;
    background: #ffffff;
    border: 1px solid #d4d4d4;
    border-radius: 14px;
    box-shadow: 0 2px 3px rgba(0, 0, 0, 0.12);
}
.pill + .pill {
    margin-top: -1px;
}
.discover {
    display: flex;
    align-items: center;
    justify-content: space-between;
    width: 601px;
    margin-top: 29px;
    height: 44px;
    font-size: 28.4px;
    font-weight: 500;
    color: #333333;
}
.card {
    position: relative;
    width: 610px;
    height: 514px;
    margin-top: 11px;
    padding: 25px 0 0 20px;
    background: #ffffff;
    border: 3px solid #c6c6c6;
    box-shadow: 0 1px 3px rgba(0, 0, 0, 0.15);
}
.card-title {
    line-height: 36px;
    font-size: 27.8px;
    color: #333333;
}
.card-sub {
    margin-top: 11px;
    line-height: 32px;
    font-size: 23.7px;
    color: #555555;
}
.chart {
    display: block;
    margin: 10px 0 0 -20px;
}
.gridlines path {
    fill: none;
    stroke: #ededed;
    stroke-width: 1.5;
}
.chart text {
    font-family: "Lato", "Liberation Sans", sans-serif;
    font-size: 20.5px;
    fill: #666666;
}
.chart .axis-y {
    font-size: 21px;
}
.ticks-y text {
    text-anchor: end;
}
.ticks-x text, .axis-x, .axis-y {
    text-anchor: middle;
}
.points ellipse {
    fill: #4472c4;
}
.card-actions {
    display: flex;
    align-items: center;
    justify-content: space-between;
    width: 564px;
    height: 95px;
    margin-top: 9px;
    border-top: 2px solid #eeeeee;
}
.insert-btn {
    display: flex;
    align-items: center;
    gap: 16px;
    width: 234px;
    height: 55px;
    padding-left: 22px;
    border: 2px solid #8c8c8c;
    border-radius: 5px;
    color: #1f5c32;
    font-size: 27.6px;
    font-weight: 500;
}
.thumbs {
    display: flex;
    gap: 18px;
    margin-right: 8px;
}
.chart-mark {
    left: -1px;
    top: 405px;
    width: 305px;
    height: 103px;
}
.next {
    height: 60px;
    margin-top: 19px;
}
```
